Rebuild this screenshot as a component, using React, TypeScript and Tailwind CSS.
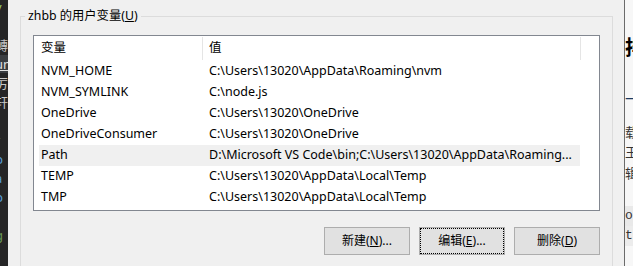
const rows = [
  { name: "NVM_HOME", value: "C:\\Users\\13020\\AppData\\Roaming\\nvm" },
  { name: "NVM_SYMLINK", value: "C:\\node.js" },
  { name: "OneDrive", value: "C:\\Users\\13020\\OneDrive" },
  { name: "OneDriveConsumer", value: "C:\\Users\\13020\\OneDrive" },
  { name: "Path", value: "D:\\Microsoft VS Code\\bin;C:\\Users\\13020\\AppData\\Roaming...", selected: true },
  { name: "TEMP", value: "C:\\Users\\13020\\AppData\\Local\\Temp" },
  { name: "TMP", value: "C:\\Users\\13020\\AppData\\Local\\Temp" },
];

// bits of the code editor peeking out on the left
const leftBits = [
  { t: "v", c: "text-[#9ccc65]" },
  { t: "", c: "" },
  { t: "轉", c: "text-[#c8c8c8]" },
  { t: "un", c: "text-[#e0e0e0] underline bg-[#3a3d41]" },
  { t: "厉", c: "text-[#c8c8c8]" },
  { t: "轩", c: "text-[#c8c8c8]" },
  { t: "", c: "" },
  { t: "r", c: "text-[#569cd6]" },
  { t: "p", c: "text-[#569cd6]" },
  { t: "a", c: "text-[#569cd6]" },
  { t: "p", c: "text-[#569cd6]" },
  { t: "", c: "" },
  { t: "g", c: "text-[#6a9955]" },
];

function Btn({ label, hot, rest, focus }: { label: string; hot: string; rest: string; focus?: boolean }) {
  return (
    <button className="relative w-[86px] h-[28px] bg-[#e1e1e1] border border-[#adadad] text-[12px] text-black flex items-center justify-center">
      {focus && <span className="absolute inset-0 border border-dotted border-black" />}
      <span>
        {label}(<span className="underline">{hot}</span>){rest}
      </span>
    </button>
  );
}

export default function App() {
  return (
    <div className="flex w-[633px] h-[266px] overflow-hidden font-['Microsoft_YaHei_UI','Noto_Sans','Noto_Sans_CJK_SC',sans-serif]">
      {/* editor strip */}
      <div className="w-[8px] shrink-0 bg-[#252526] overflow-hidden">
        <div className="-mt-[2px] flex flex-col">
          {leftBits.map((b, i) => (
            <div key={i} className="h-[19px] leading-[19px] text-[13px] whitespace-nowrap -ml-[5px]">
              <span className={b.c}>{b.t}</span>
            </div>
          ))}
        </div>
      </div>

      {/* dialog */}
      <div className="w-[616px] shrink-0 bg-[#f0f0f0] pl-[12px] pr-[11px] pt-[8px] text-black text-[12px]">
        <fieldset className="border border-[#dcdcdc] px-[12px] pt-[11px] h-[300px]">
          <legend className="-ml-[8px] px-[3px] leading-[16px] text-[12.3px]">
            zhbb 的用户变量(<span className="underline">U</span>)
          </legend>

          <div className="h-[176px] border border-[#828790] bg-white text-[12.5px]">
            <div className="flex h-[25px] items-stretch pl-[5px]">
              <div className="w-[163px] pl-[2px] flex items-center">变量</div>
              <div className="w-px my-[1px] bg-[#e5e5e5]" />
              <div className="flex-1 pl-[6px] flex items-center">值</div>
              <div className="w-px my-[1px] bg-[#e5e5e5] mr-[18px]" />
            </div>
            {rows.map((r) => (
              <div
                key={r.name}
                className={`flex h-[21px] items-center ml-[5px] w-[541px] ${r.selected ? "bg-[#f0f0f0]" : ""}`}
              >
                <div className="w-[164px] pl-[2px] whitespace-nowrap">{r.name}</div>
                <div className="flex-1 pl-[6px] whitespace-nowrap overflow-hidden">{r.value}</div>
              </div>
            ))}
          </div>

          <div className="flex justify-end gap-[9px] mt-[16px]">
            <Btn label="新建" hot="N" rest="..." />
            <Btn label="编辑" hot="E" rest="..." focus />
            <Btn label="删除" hot="D" rest="" />
          </div>
        </fieldset>
      </div>

      {/* window behind, right edge */}
      <div className="w-[9px] shrink-0 bg-[#f7f7f7] border-l border-[#6b6b6b] overflow-hidden text-black">
        <div className="flex flex-col whitespace-nowrap">
          <div className="mt-[36px] h-[24px] leading-[24px] text-[20px] font-bold">排</div>
          <div className="mt-[28px] h-[18px] leading-[18px] text-[16px] text-[#1e3a5f]">—</div>
          <div className="mt-[16px] h-[20px] leading-[20px] text-[13px] text-[#333]">载</div>
          <div className="h-[21px] leading-[21px] text-[13px] text-[#333]">玉</div>
          <div className="h-[21px] leading-[21px] text-[13px] text-[#333]">辑</div>
          <div className="mt-[22px] h-[20px] leading-[20px] text-[13px] font-['Liberation_Mono',monospace] bg-[#e9e9e9] text-[#333]">of</div>
          <div className="h-[20px] leading-[20px] text-[13px] font-['Liberation_Mono',monospace] bg-[#ececec] text-[#333]">tR</div>
        </div>
      </div>
    </div>
  );
}
